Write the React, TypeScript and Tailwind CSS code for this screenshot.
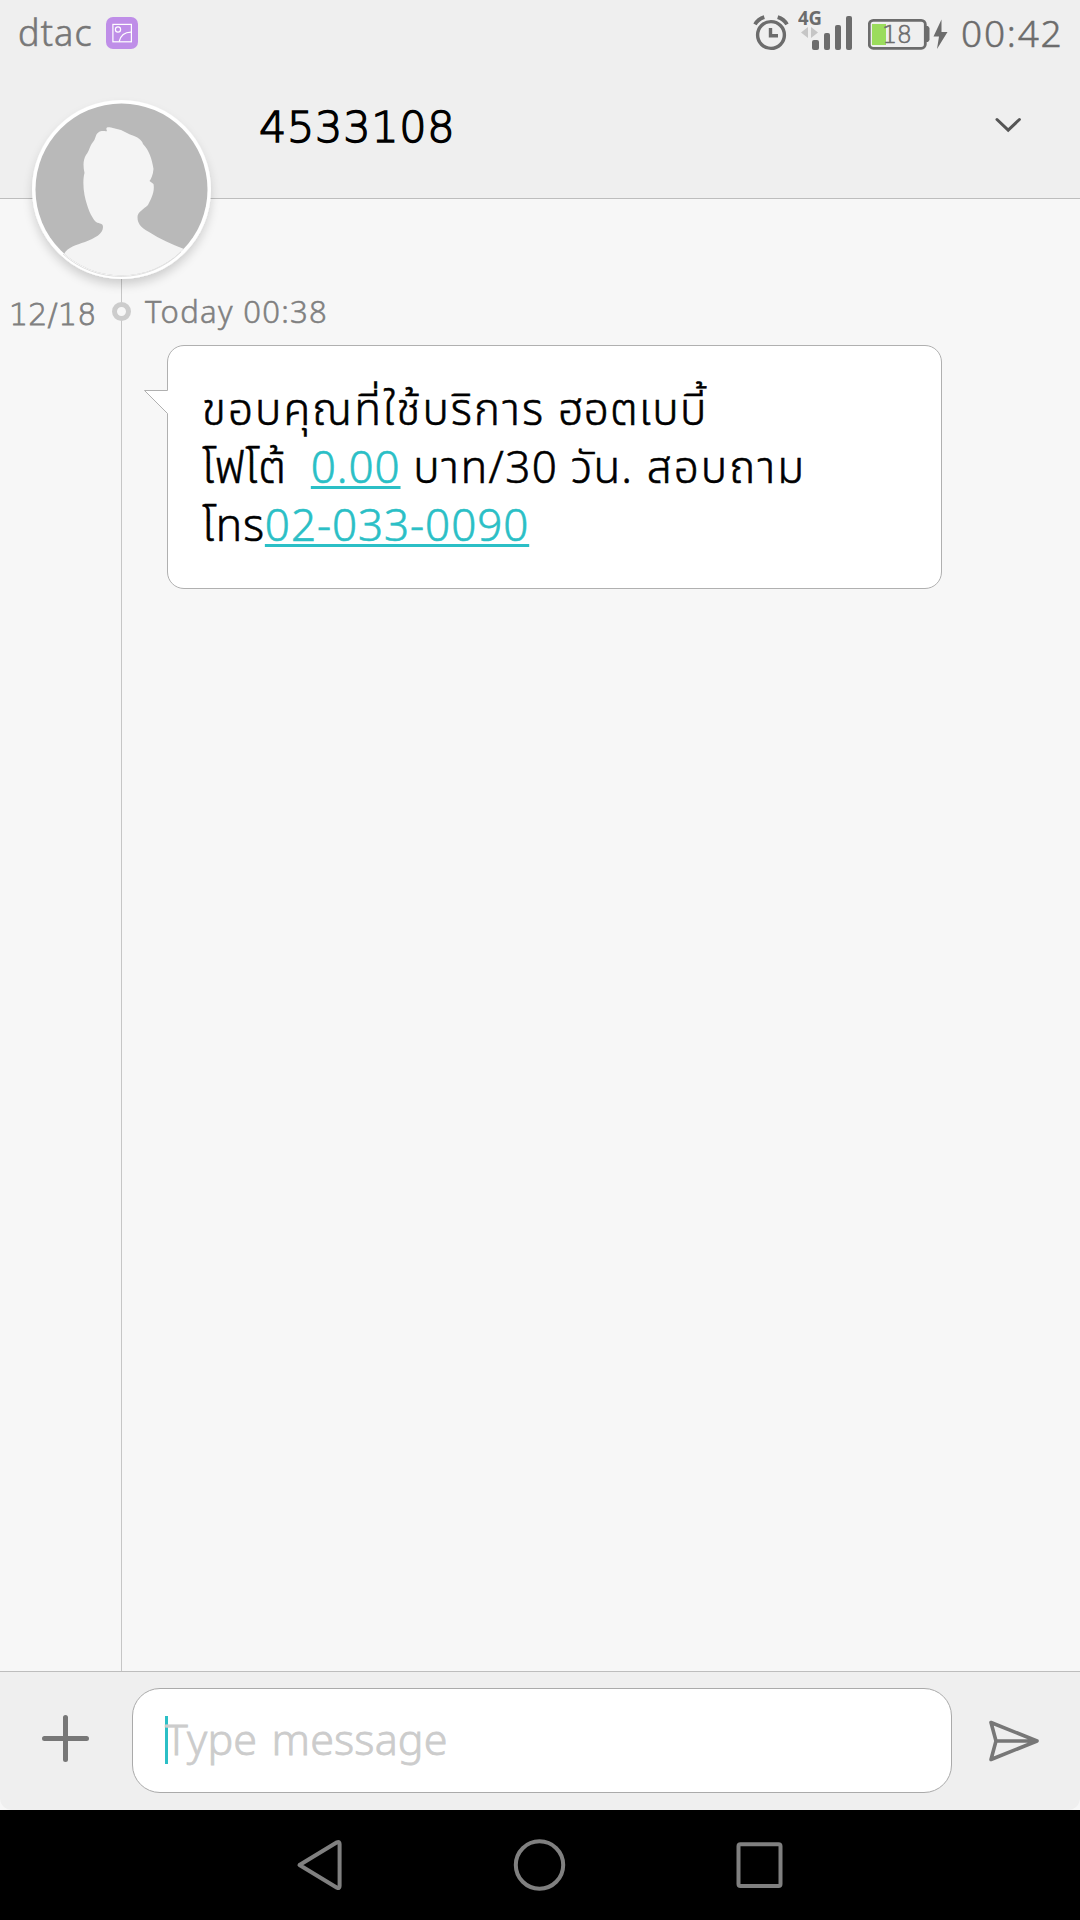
import React from "react";

const StatusBar = () => (
    <div className="flex h-[66px] items-center justify-between pl-[18px] pr-[15px] text-[#777777]">
        <div className="flex items-center">
            <span className="w-[88px] text-[36px] font-light leading-none tracking-[1.1px] [-webkit-text-stroke:0.6px_#777777]">dtac</span>
            <svg width="32" height="32" viewBox="0 0 32 32" fill="none" stroke="#fff" strokeWidth="1.2">
                <rect width="32" height="32" rx="7" fill="#bf8ee8" stroke="none" />
                <rect x="6.9" y="7.4" width="18.5" height="17.4" />
                <circle cx="12" cy="12.5" r="2.6" />
                <path d="M13.2 24.5C14.5 19 18.5 15.3 25 15.2" />
            </svg>
        </div>
        <div className="flex items-center">
            <AlarmIcon />
            <SignalIcon />
            <BatteryIcon />
            <span className="ml-[13px] w-[104px] whitespace-nowrap pb-[2px] text-[37px] font-light leading-none tracking-[1.8px] text-[#6c6c6c] [-webkit-text-stroke:0.5px_#6c6c6c]">00:42</span>
        </div>
    </div>
);

const AlarmIcon = () => (
    <svg className="mr-[9px]" width="36" height="66" viewBox="753 0 36 66" fill="none" stroke="#6c6c6c" strokeWidth="3.4">
        <circle cx="771" cy="35" r="13.4" />
        <path d="M770.500 28v7.800h7.500" />
        <path d="M755 24.400c2-3.500 5-6 9.300-7.300M787 24.400c-2-3.500-5-6-9.300-7.300" strokeWidth="3.8" />
    </svg>
);

const SignalIcon = () => (
    <svg className="mr-[16px]" width="54" height="66" viewBox="798 0 54 66" fill="#6c6c6c">
        <text x="798" y="24.8" fontSize="19" fontWeight="700" textLength="24" lengthAdjust="spacingAndGlyphs" fontFamily="Noto Sans">4G</text>
        <path d="M808 27v11l-7-5.500zM811 27v11l7-5.500z" fill="#c6c6c6" />
        <rect x="812" y="40" width="7" height="10" rx="2" />
        <rect x="824" y="33" width="6" height="17" rx="2" />
        <rect x="835" y="25" width="6" height="25" rx="2" />
        <rect x="846" y="16" width="6" height="34" rx="2" />
    </svg>
);

const BatteryIcon = () => (
    <svg width="80" height="66" viewBox="868 0 80 66">
        <rect x="869.3" y="20.3" width="56" height="28" rx="4" fill="none" stroke="#6c6c6c" strokeWidth="2.8" />
        <rect x="872" y="24" width="14" height="21" fill="#9bdc5c" />
        <path d="M926 26h2l1.500 2v12l-1.500 2h-2z" fill="#6c6c6c" />
        <text x="882" y="43" fontSize="24" textLength="30" fontFamily="DejaVu Sans" fontWeight="200" fill="#6c6c6c" stroke="#6c6c6c" strokeWidth="0.6">18</text>
        <path d="M941.500 19.500l-8 17h5.500l-2 12.500 10.500-17h-6z" fill="#6c6c6c" />
    </svg>
);

const Header = () => (
    <div className="flex h-[133px] justify-between border-b border-[#bdbdbd] pl-[259px]">
        <h1 className="mt-[35px] font-['DejaVu_Sans'] text-[43px] font-extralight leading-[52px] tracking-[0.7px] text-black [-webkit-text-stroke:1.4px_#000]">4533108</h1>
        <svg className="mr-[58px] mt-[50px]" width="28" height="18" viewBox="0 0 28 18" fill="none" stroke="#555" strokeWidth="3" strokeLinecap="round">
            <path d="M3 3.500l11.200 10.700L25.400 3.500" />
        </svg>
    </div>
);

const Avatar = () => (
    <svg className="absolute left-[22px] top-[90px]" width="200" height="214" viewBox="22 90 200 214">
        <defs>
            <clipPath id="face">
                <circle cx="121.5" cy="189.5" r="86" />
            </clipPath>
            <filter id="shadow" x="-20%" y="-20%" width="140%" height="140%">
                <feDropShadow dx="0" dy="6" stdDeviation="5" floodOpacity="0.16" />
            </filter>
        </defs>
        <circle cx="121.5" cy="189.5" r="89.5" fill="#fff" filter="url(#shadow)" />
        <circle cx="121.5" cy="189.5" r="86" fill="#b9b9b9" />
        <path
            clipPath="url(#face)"
            fill="#f4f4f4"
            d="M64 254C68 247 76 245 85 242C95 238 103 234 103 227C103 223 100 224 96 222C91 217 87 207 84.500 195C83 187 83 178 84.500 173C83 166 83 160 86 155C90 150 89 147 93 142C96 139 95 134 99 132C102 130 106 132 107 131C105 127 108 127 111 127.500L121 130L130 134.500C138 137 142 140 143 144C149 150 152 159 153.500 169C153 175 151 179 149.500 181L153.500 184C155 192 151 199 148 205C144 209 137.500 212 137.500 217C137.500 223 140 227 149 232C160 239 171 244 184 249L180 280H66Z"
        />
        <path d="M64 253a86 86 0 0 0 118-2" transform="translate(-1 1)" fill="none" stroke="#d8d8d8" strokeWidth="0.8" />
    </svg>
);

const Bubble = () => (
    <div className="relative ml-[45px] mt-[13px] h-[244px] w-[775px] rounded-[17px] border border-[#b0b0b0] bg-white pl-[34px] pt-[33px] text-[44px] font-light leading-[58px] text-black [-webkit-text-stroke:0.6px]">
        <svg className="absolute -left-[25px] top-[43px]" width="26" height="27" viewBox="0 0 26 27">
            <path d="M1.500 1.500H25.500V24.500H24.500Z" fill="#fff" />
            <path d="M24.500 1.500H1.500L24.500 24.500" fill="none" stroke="#b0b0b0" />
        </svg>
        <p className="whitespace-pre">
            <span className="tracking-[2.1px]">ขอบคุณที่ใช้บริการ</span>
            <span className="tracking-[1.3px]"> ฮอตเบบี้</span>
        </p>
        <p className="whitespace-pre">
            <span className="tracking-[0.7px]">โฟโต้  </span>
            <Link>0.00</Link>
            <span className="tracking-[1.4px]"> บาท/30</span>
            <span className="tracking-[1.1px]"> วัน.</span>
            <span className="tracking-[2.1px]"> สอบถาม</span>
        </p>
        <p className="whitespace-pre">
            <span className="tracking-[0.8px]">โทร</span>
            <Link>02-033-0090</Link>
        </p>
    </div>
);

const Link = ({ children }: { children: React.ReactNode }) => (
    <a className="tracking-[0.9px] text-[#2bbfc6] underline decoration-[3px] underline-offset-[3px]">{children}</a>
);

const Composer = () => (
    <div className="bg-[#f7f7f7]">
        <div className="flex h-[139px] rounded-b-[12px] border-t border-[#bdbdbd] bg-[#efefef] pt-[16px]">
            <svg className="ml-[41px] mt-[26px]" width="50" height="50" viewBox="0 0 50 50" stroke="#777" strokeWidth="5" strokeLinecap="round">
                <path d="M24.500 3.500v42M3.500 24.500h42" />
            </svg>
            <div className="ml-[41px] flex h-[105px] w-[820px] items-center rounded-[28px] border border-[#aaaaaa] bg-white pb-[2px] pl-[32px]">
                <div className="h-[48px] w-[3px] bg-[#2bbfc6]" />
                <span className="-ml-[3px] whitespace-nowrap pb-[3px] text-[43px] font-light leading-none tracking-[0.15px] text-[#cccccc] [-webkit-text-stroke:0.8px_#cccccc] [word-spacing:3px]">Type message</span>
            </div>
            <svg className="ml-[35px] mt-[31px]" width="54" height="44" viewBox="0 0 54 44" fill="none" stroke="#777" strokeWidth="3.6" strokeLinejoin="round">
                <path d="M4 3.500L50 22L4 40.500L9 22ZM9 22H50" />
            </svg>
        </div>
    </div>
);

const NavBar = () => (
    <div className="flex h-[110px] items-center bg-black">
        <svg width="1080" height="110" viewBox="0 0 1080 110" fill="none" stroke="#808080" strokeWidth="4" strokeLinejoin="round">
            <path d="M299.500 55L337 32.300Q339.600 31 339.600 34V76Q339.600 79 337 77.700Z" />
            <circle cx="539.500" cy="55" r="23.700" />
            <rect x="738.500" y="34.200" width="42" height="41.700" rx="2" />
        </svg>
    </div>
);

export default function App() {
    return (
        <div className="relative flex h-[1920px] w-[1080px] flex-col overflow-hidden bg-[#efefef] font-['Noto_Sans','Noto_Sans_Thai',sans-serif]">
            <StatusBar />
            <Header />
            <div className="flex flex-1 bg-[#f7f7f7]">
                <div className="w-[122px] border-r border-[#c6c6c6] pt-[94px]">
                    <div className="relative pl-[9px] pt-[3px] font-['DejaVu_Sans'] text-[30px] font-extralight leading-[38px] tracking-[0.2px] text-[#808080] [-webkit-text-stroke:0.8px_#808080]">
                        12/18
                        <div className="absolute -right-[10px] top-[9px] h-[19px] w-[19px] rounded-full border-[5px] border-[#cccccc] bg-[#f7f7f7]" />
                    </div>
                </div>
                <div className="pt-[92px]">
                    <div className="h-[41px] pl-[23px] text-[31px] font-light leading-[40px] tracking-[1.3px] text-[#808080] [-webkit-text-stroke:0.5px_#808080]">Today 00:38</div>
                    <Bubble />
                </div>
            </div>
            <Composer />
            <NavBar />
            <Avatar />
        </div>
    );
}
